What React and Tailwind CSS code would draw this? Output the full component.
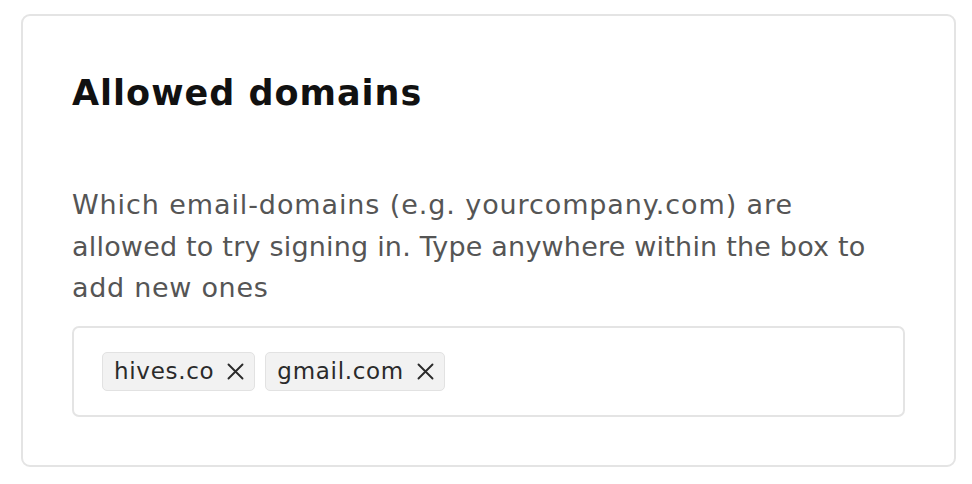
import React from 'react';

const domains = ['hives.co', 'gmail.com'];

const Cross = () => (
  <svg width="17" height="17" viewBox="0 0 17 17" fill="none" stroke="#2a2a2a" strokeWidth="1.9" strokeLinecap="round">
    <path d="M1.5 1.5l14 14M15.5 1.5l-14 14" />
  </svg>
);

const App = () => {
  return (
    <div className="min-h-screen bg-white pt-[14px] pl-[21px]" style={{ fontFamily: '"DejaVu Sans", sans-serif' }}>
      <div className="w-[935px] h-[453px] rounded-[9px] border-2 border-[#e4e4e4] bg-white px-[49px] pt-[55px]">
        <h1 className="text-[35px] leading-[44px] font-bold text-[#111] tracking-[1px]">
          Allowed domains
        </h1>

        <p className="mt-[69px] text-[27px] leading-[41.5px] text-[#555]">
          <span className="block tracking-[0.9px]">Which email-domains (e.g. yourcompany.com) are</span>
          <span className="block tracking-[0.2px]">allowed to try signing in. Type anywhere within the box to</span>
          <span className="block tracking-[0.7px]">add new ones</span>
        </p>

        <div className="mt-[17px] h-[91px] rounded-[7px] border-2 border-[#e4e4e4] px-[28px] flex items-center gap-[10px]">
          {domains.map(d => (
            <span
              key={d}
              className="h-[39px] flex items-center gap-[13px] pl-[11px] pr-[10px] rounded-[5px] bg-[#f2f2f2] border border-[#e2e2e2] text-[23px] tracking-[0.7px] text-[#2a2a2a]"
            >
              {d}
              <Cross />
            </span>
          ))}
        </div>
      </div>
    </div>
  );
};

export default App;
